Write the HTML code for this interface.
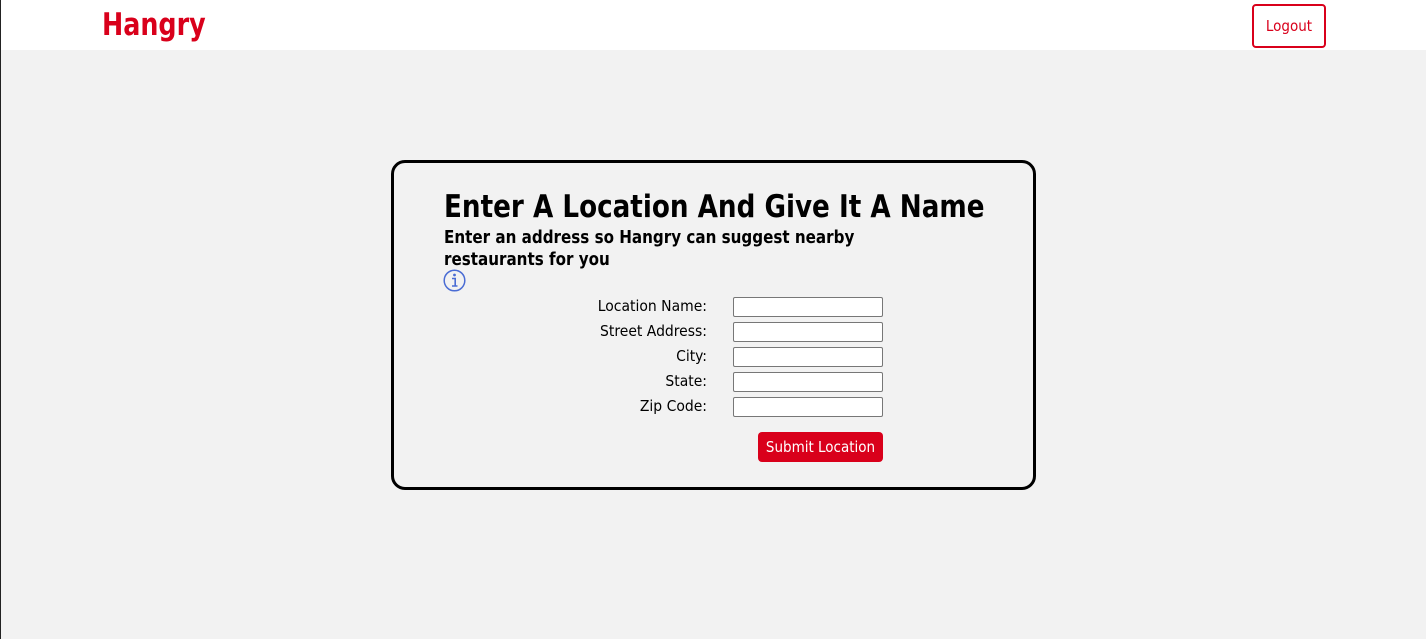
<!DOCTYPE html>
<html><head><style>
html,body{margin:0;padding:0;}
body{width:1426px;height:639px;background:#f2f2f2;position:relative;overflow:hidden;font-family:"DejaVu Sans Condensed","DejaVu Sans",sans-serif;}
.lb{position:absolute;left:0;top:0;width:1px;height:639px;background:#222;z-index:5;}
.hdr{position:absolute;left:0;top:0;width:1426px;height:50px;background:#fff;}
.logo{position:absolute;left:102px;top:7px;font-size:31px;font-weight:bold;color:#d9001b;transform:scaleX(0.91);transform-origin:0 0;}
.logout{position:absolute;left:1252px;top:4px;width:70px;height:40px;border:2px solid #d9001b;border-radius:4px;color:#d9001b;font-size:15px;line-height:40px;text-align:center;background:#fff;}
.card{position:absolute;left:391px;top:160px;width:639px;height:324px;border:3px solid #000;border-radius:14px;}
.t{position:absolute;white-space:nowrap;transform-origin:0 0;}
.lbl{position:absolute;right:719px;font-size:15.5px;white-space:nowrap;color:#000;}
.inp{position:absolute;left:733px;width:148px;height:18px;border:1px solid #777;border-radius:2px;background:#fff;}
.btn{position:absolute;left:758px;top:432px;width:125px;height:30px;background:#d9001b;border-radius:4px;color:#fff;font-size:15px;line-height:30px;text-align:center;}
</style></head><body>
<div class="lb"></div>
<div class="hdr"><div class="logo">Hangry</div><div class="logout">Logout</div></div>
<div class="card"></div>
<div class="t" style="left:444px;top:189px;font-size:31px;font-weight:bold;transform:scaleX(0.94);">Enter A Location And Give It A Name</div>
<div class="t" style="left:444px;top:227px;font-size:18px;font-weight:bold;line-height:22px;transform:scaleX(0.935);">Enter an address so Hangry can suggest nearby<br>restaurants for you</div>
<svg style="position:absolute;left:443px;top:269px" width="23" height="23" viewBox="0 0 23 23"><circle cx="11.5" cy="11.5" r="10.3" fill="none" stroke="#4a6cd4" stroke-width="1.5"/><circle cx="11.5" cy="6" r="1.4" fill="#4a6cd4"/><path d="M9 9.5h3.2v7.5M9 17h5.5" fill="none" stroke="#4a6cd4" stroke-width="1.6"/></svg>
<div class="lbl" style="top:297px">Location Name:</div><div class="inp" style="top:297px"></div>
<div class="lbl" style="top:322px">Street Address:</div><div class="inp" style="top:322px"></div>
<div class="lbl" style="top:347px">City:</div><div class="inp" style="top:347px"></div>
<div class="lbl" style="top:372px">State:</div><div class="inp" style="top:372px"></div>
<div class="lbl" style="top:397px">Zip Code:</div><div class="inp" style="top:397px"></div>
<div class="btn">Submit Location</div>
</body></html>
